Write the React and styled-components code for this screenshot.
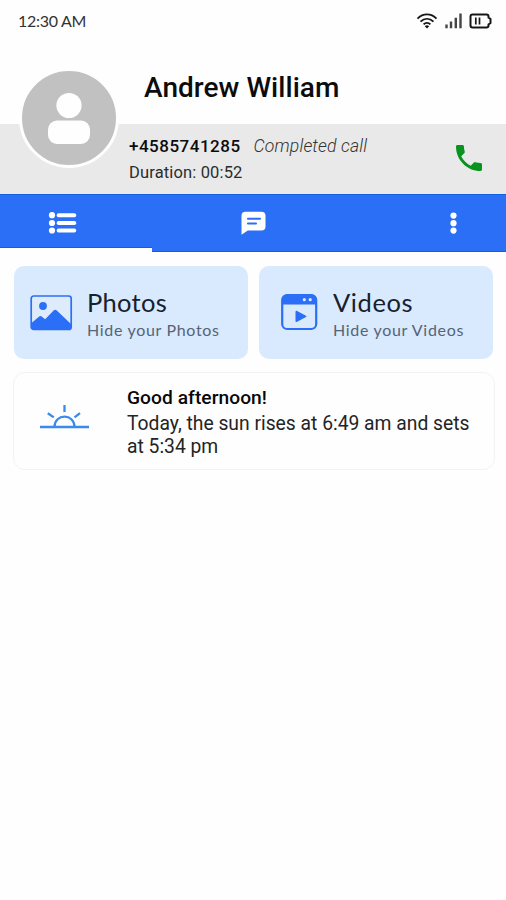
import React from "react";
import styled, { createGlobalStyle } from "styled-components";

const GlobalStyle = createGlobalStyle`
  * { box-sizing: border-box; }
  body { margin: 0; background: #fefefe; }
`;

const Screen = styled.main`
  width: 506px;
  height: 900px;
  overflow: hidden;
  background: #fefefe;
  color: #0c0c0c;
  font-family: Roboto, "Liberation Sans", sans-serif;
  svg { display: block; flex: none; }
`;

const StatusBar = styled.div`
  height: 42px;
  display: flex;
  align-items: center;
  justify-content: space-between;
  padding: 0 13px 0 18px;
`;

const Clock = styled.time`
  font: 400 16px/20px Lato, sans-serif;
  letter-spacing: -0.3px;
  color: #333;
`;

const StatusIcons = styled.div`
  display: flex;
  align-items: center;
  gap: 7px;
`;

const Caller = styled.header`
  height: 152px;
  display: grid;
  grid-template-columns: 129px 1fr;
  background: linear-gradient(#fefefe 82px, #e9e9e9 82px);
`;

const Avatar = styled.div`
  width: 100px;
  height: 100px;
  margin: 26px 0 0 19px;
  border-radius: 50%;
  background: #c1c1c1;
  border: 3px solid #fefefe;
`;

const CallerInfo = styled.div`
  display: flex;
  flex-direction: column;
`;

const Name = styled.h1`
  height: 82px;
  margin: 0;
  padding: 29px 0 0 15px;
  font-size: 28px;
  font-weight: 500;
  line-height: 34px;
  letter-spacing: 0.05px;
  white-space: nowrap;
`;

const CallRow = styled.div`
  height: 70px;
  display: flex;
  justify-content: space-between;
  padding: 9px 24px 0 0;
`;

const CallLine = styled.div`
  height: 26px;
  display: flex;
  align-items: center;
  gap: 13px;
  white-space: nowrap;
`;

const Phone = styled.span`
  font-size: 17px;
  font-weight: 500;
  letter-spacing: 0.5px;
`;

const CallState = styled.em`
  font-size: 17.6px;
  font-weight: 300;
  color: #333;
  letter-spacing: 0.15px;
`;

const Duration = styled.span`
  font-size: 16.5px;
  color: #2c2c2c;
  letter-spacing: 0.15px;
`;

const CallButton = styled.span`
  margin-top: 12px;
`;

const Tabs = styled.nav`
  height: 58px;
  display: grid;
  grid-template-columns: 152px 203px 151px;
  background: #2a6ff6;
  box-shadow: inset 0 1px #1260df, inset 0 -1px #1260df;
`;

const Tab = styled.div`
  display: flex;
  padding: ${(p) => p.$pad};
  border-bottom: ${(p) => (p.$active ? "4px solid #fefefe" : "0")};
  box-shadow: ${(p) => (p.$active ? "inset 0 -1px #1260df" : "none")};
`;

const Vault = styled.section`
  display: grid;
  grid-template-columns: 234px 234px;
  gap: 11px;
  padding: 14px 13px 0 14px;
`;

const VaultCard = styled.article`
  height: 93px;
  display: grid;
  grid-template-columns: ${(p) => p.$textStart - p.$inset}px 1fr;
  padding-left: ${(p) => p.$inset}px;
  border-radius: 10px;
  background: #d9e9fe;
  & > svg { margin-top: 27px; }
`;

const VaultText = styled.div`
  padding: 20px 0 0;
  font-family: Lato, sans-serif;
  white-space: nowrap;
`;

const VaultTitle = styled.h2`
  margin: 0;
  font-size: 25.5px;
  font-weight: 400;
  line-height: 32px;
  letter-spacing: ${(p) => p.$track}px;
  color: #17212b;
`;

const VaultNote = styled.p`
  margin: 2px 0 0;
  font-size: 16px;
  line-height: 20px;
  letter-spacing: 0.68px;
  color: #556475;
`;

const SunCard = styled.section`
  width: 482px;
  height: 98px;
  margin: 13px 0 0 13px;
  display: grid;
  grid-template-columns: 113px 1fr;
  border: 1px solid #f2f2f2;
  border-radius: 12px;
  & > svg { margin: 30px 0 0 25px; }
`;

const SunText = styled.div`
  padding-top: 13px;
  font-size: 19.3px;
  line-height: 23px;
  color: #242424;
  white-space: nowrap;
`;

const Greeting = styled.h3`
  margin: 0 0 3px;
  font-size: 19.2px;
  font-weight: 500;
  line-height: 23px;
  letter-spacing: 0.05px;
  color: #080808;
`;

const WifiIcon = () => (
  <svg width="22" height="18" viewBox="0 0 22 18" fill="none" stroke="#161616" strokeWidth="1.9">
    <path d="M1.5 6.6C7 1 15 1 20.5 6.6M4.5 9.6c4-3.7 9-3.7 13 0M7.6 12.4c2-2 4.8-2 6.8 0" />
    <path d="M8.8 14.2Q11 12.2 13.2 14.2L11 16.4z" fill="#161616" stroke="none" />
  </svg>
);

const SignalIcon = () => (
  <svg width="17" height="16" viewBox="0 0 17 16" stroke="#444" strokeWidth="2.4">
    <path d="M1.5 11.5v3.7M6 8.5v6.7M10.8 4.8v10.4M15.5 .5v14.7" />
  </svg>
);

const BatteryIcon = () => (
  <svg width="24" height="16" viewBox="0 0 24 16" fill="none" stroke="#161616" strokeWidth="2">
    <path d="M3.5 1.5h14q2 0 2 2v1l2 1.5v4l-2 1.5v1q0 2-2 2h-14q-2 0-2-2v-9q0-2 2-2z" />
    <path d="M6.8 4.5v7M10.5 4.5v7" strokeWidth="1.7" />
  </svg>
);

const PersonIcon = () => (
  <svg width="94" height="94" viewBox="0 0 94 94" fill="#fefefe">
    <circle cx="47" cy="34.5" r="12.6" />
    <rect x="26" y="49.5" width="42" height="23.5" rx="9" />
  </svg>
);

const PhoneIcon = () => (
  <svg width="26" height="26" viewBox="3 3 18 18" fill="#07931d">
    <path d="M6.62 10.79c1.44 2.83 3.76 5.14 6.59 6.59l2.2-2.2c.27-.27.67-.36 1.02-.24 1.12.37 2.33.57 3.57.57.55 0 1 .45 1 1V20c0 .55-.45 1-1 1-9.39 0-17-7.61-17-17 0-.55.45-1 1-1h3.5c.55 0 1 .45 1 1 0 1.25.2 2.45.57 3.57.11.35.03.74-.25 1.02l-2.2 2.2z" />
  </svg>
);

const ListIcon = () => (
  <svg width="29" height="24" viewBox="0 0 29 24" fill="#fefefe">
    {[4.2, 12, 19.5].map((y) => (
      <g key={y}>
        <circle cx="4" cy={y} r="3.1" />
        <rect x="8.7" y={y - 2} width="19.5" height="4" rx="1.8" />
      </g>
    ))}
  </svg>
);

const ChatIcon = () => (
  <svg width="25" height="24" viewBox="0 0 25 24">
    <path d="M4.5.8h16q4 0 4 4v10.7q0 4-4 4H6.8L.5 23.7V4.8q0-4 4-4z" fill="#fefefe" />
    <path d="M7 7.8h12M7 12.5h8" stroke="#2a6ff6" strokeWidth="2.1" strokeLinecap="round" />
  </svg>
);

const MoreIcon = () => (
  <svg width="8" height="24" viewBox="0 0 8 24" fill="#fefefe">
    <circle cx="4.5" cy="4.6" r="3.1" />
    <circle cx="4.5" cy="12.2" r="3.1" />
    <circle cx="4.5" cy="19.6" r="3.1" />
  </svg>
);

const PhotoIcon = () => (
  <svg width="43" height="38" viewBox="0 0 43 38">
    <rect x="1.2" y="3" width="40" height="33.4" rx="2.5" fill="#deebfb" stroke="#2a6ff6" strokeWidth="1.7" />
    <circle cx="13" cy="13" r="3.9" fill="#2a6ff6" />
    <path d="M1.5 30L9.2 23.6q1.2-1.1 2.5 0l3.4 2.6 8.8-9q1.3-1.1 2.6 0L41 31v3.4q0 2-2 2H3.5q-2 0-2-2z" fill="#2a6ff6" />
  </svg>
);

const VideoIcon = () => (
  <svg width="37" height="38" viewBox="0 0 37 38">
    <rect x="1.2" y="2" width="34" height="34" rx="5" fill="none" stroke="#2a6ff6" strokeWidth="2.2" />
    <path d="M1 11.5V7q0-5.5 5.5-5.5H30Q35.5 1.5 35.5 7v4.5z" fill="#2a6ff6" />
    <circle cx="23.3" cy="6.7" r="1.6" fill="#d9e9fe" />
    <circle cx="29.2" cy="6.7" r="1.6" fill="#d9e9fe" />
    <path d="M15.3 18.5v9.8l9.3-4.9z" fill="#2a6ff6" stroke="#2a6ff6" strokeWidth="1.6" strokeLinejoin="round" />
  </svg>
);

const SunIcon = () => (
  <svg width="51" height="28" viewBox="0 0 51 28" fill="none" stroke="#398bea" strokeWidth="2.3">
    <path d="M1 24h49M15.5 24c0-13.8 20-13.8 20 0M25.5 2v7M8.8 10.2l6 4.2M41 10.2l-5.5 4.2" />
  </svg>
);

export default function App() {
  return (
    <>
      <GlobalStyle />
      <Screen>
        <StatusBar>
          <Clock>12:30 AM</Clock>
          <StatusIcons>
            <WifiIcon />
            <SignalIcon />
            <BatteryIcon />
          </StatusIcons>
        </StatusBar>
        <Caller>
          <Avatar><PersonIcon /></Avatar>
          <CallerInfo>
            <Name>Andrew William</Name>
            <CallRow>
              <div>
                <CallLine>
                  <Phone>+4585741285</Phone>
                  <CallState>Completed call</CallState>
                </CallLine>
                <CallLine><Duration>Duration: 00:52</Duration></CallLine>
              </div>
              <CallButton><PhoneIcon /></CallButton>
            </CallRow>
          </CallerInfo>
        </Caller>
        <Tabs>
          <Tab $active $pad="17px 0 0 48px"><ListIcon /></Tab>
          <Tab $pad="17px 0 0 89px"><ChatIcon /></Tab>
          <Tab $pad="17px 0 0 94px"><MoreIcon /></Tab>
        </Tabs>
        <Vault>
          <VaultCard $inset={16} $textStart={73}>
            <PhotoIcon />
            <VaultText>
              <VaultTitle $track={0.3}>Photos</VaultTitle>
              <VaultNote>Hide your Photos</VaultNote>
            </VaultText>
          </VaultCard>
          <VaultCard $inset={22} $textStart={74}>
            <VideoIcon />
            <VaultText>
              <VaultTitle $track={0.6}>Videos</VaultTitle>
              <VaultNote>Hide your Videos</VaultNote>
            </VaultText>
          </VaultCard>
        </Vault>
        <SunCard>
          <SunIcon />
          <SunText>
            <Greeting>Good afternoon!</Greeting>
            <div>Today, the sun rises at 6:49 am and sets</div>
            <div>at 5:34 pm</div>
          </SunText>
        </SunCard>
      </Screen>
    </>
  );
}
